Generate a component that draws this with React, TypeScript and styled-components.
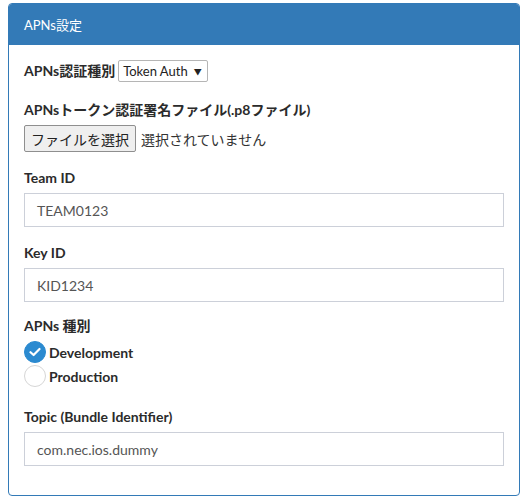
import React from "react";
import styled, { createGlobalStyle } from "styled-components";

const GlobalStyle = createGlobalStyle`
  body {
    margin: 0;
    padding: 3px 7px 0 8px;
    background: #fff;
    font-family: Lato, "Noto Sans CJK JP", sans-serif;
    color: #333;
  }
`;

const Panel = styled.div`
  width: 510px;
  border: 1px solid #337ab7;
  border-radius: 4px;
  overflow: hidden;
`;

const PanelHeading = styled.div`
  height: 41px;
  background: #337ab7;
  color: #fff;
  font-size: 13px;
  display: flex;
  align-items: center;
  padding: 0 15px;
`;

const PanelBody = styled.div`
  padding: 15px 15px 13px;
  display: flex;
  flex-direction: column;
`;

const Label = styled.div`
  font-size: 14px;
  font-weight: 700;
  color: #2b2b2b;
  line-height: 20px;
`;

const InlineRow = styled.div`
  display: flex;
  align-items: center;
  gap: 3px;
  height: 22px;
  margin-bottom: 18px;
`;

const Select = styled.div`
  display: flex;
  align-items: center;
  gap: 6px;
  height: 20px;
  padding: 0 5px 0 4px;
  border: 1px solid #b5b5b5;
  border-radius: 2px;
  font-size: 13px;
  color: #222;
`;

const Arrow = styled.span`
  font-size: 8px;
`;

const Field = styled.div<{ $mb?: number }>`
  display: flex;
  flex-direction: column;
  gap: 5px;
  margin-bottom: ${(p) => p.$mb ?? 16}px;
`;

const FileRow = styled.div`
  display: flex;
  align-items: center;
  gap: 5px;
`;

const FileButton = styled.div`
  height: 25px;
  padding: 0 6px;
  display: flex;
  align-items: center;
  background: #efefef;
  border: 1px solid #8f8f8f;
  border-radius: 2px;
  font-size: 14px;
  color: #222;
`;

const FileNote = styled.span`
  font-size: 14px;
  color: #333;
`;

const Input = styled.div`
  width: 478px;
  height: 32px;
  box-sizing: content-box;
  border: 1px solid #ccd0d9;
  display: flex;
  align-items: center;
  font-size: 14px;
  color: #555;

  span {
    padding-left: 12px;
  }
`;

const RadioList = styled.div`
  display: flex;
  flex-direction: column;
  gap: 2px;
`;

const RadioRow = styled.div`
  display: flex;
  align-items: center;
  gap: 3px;
  font-size: 14px;
  font-weight: 700;
  color: #2b2b2b;
`;

const Circle = styled.div<{ $checked?: boolean }>`
  width: 22px;
  height: 22px;
  border-radius: 50%;
  box-sizing: border-box;
  display: flex;
  align-items: center;
  justify-content: center;
  background: ${(p) => (p.$checked ? "#2b8ad0" : "#fff")};
  border: 1px solid ${(p) => (p.$checked ? "#2b8ad0" : "#d6d6d6")};
`;

const Radio = ({ checked, label }: { checked?: boolean; label: string }) => (
  <RadioRow>
    <Circle $checked={checked}>
      {checked && (
        <svg width="12" height="10" viewBox="0 0 12 10">
          <path d="M1.5 5.2 L4.6 8 L10.5 2" fill="none" stroke="#fff" strokeWidth="2.2" strokeLinecap="round" strokeLinejoin="round" />
        </svg>
      )}
    </Circle>
    {label}
  </RadioRow>
);

const App = () => (
  <>
    <GlobalStyle />
    <Panel>
      <PanelHeading>APNs設定</PanelHeading>
      <PanelBody>
        <InlineRow>
          <Label>APNs認証種別</Label>
          <Select>
            Token Auth <Arrow>▼</Arrow>
          </Select>
        </InlineRow>
        <Field>
          <Label>APNsトークン認証署名ファイル(.p8ファイル)</Label>
          <FileRow>
            <FileButton>ファイルを選択</FileButton>
            <FileNote>選択されていません</FileNote>
          </FileRow>
        </Field>
        <Field>
          <Label>Team ID</Label>
          <Input>
            <span>TEAM0123</span>
          </Input>
        </Field>
        <Field $mb={14}>
          <Label>Key ID</Label>
          <Input>
            <span>KID1234</span>
          </Input>
        </Field>
        <Field $mb={20}>
          <Label>APNs 種別</Label>
          <RadioList>
            <Radio checked label="Development" />
            <Radio label="Production" />
          </RadioList>
        </Field>
        <Field>
          <Label>Topic (Bundle Identifier)</Label>
          <Input>
            <span>com.nec.ios.dummy</span>
          </Input>
        </Field>
      </PanelBody>
    </Panel>
  </>
);

export default App;
